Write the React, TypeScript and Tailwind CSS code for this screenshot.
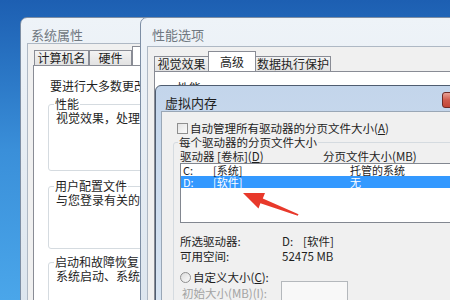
import React from 'react';

const FONT = "font-['Noto_Sans_CJK_SC','Noto_Sans',sans-serif]";

function Tab({ label, w, active }: { label: string; w: string; active?: boolean }) {
  return (
    <div
      className={`${w} shrink-0 flex items-center justify-center border border-b-0 border-[#898c95] text-[12px] leading-[14px] text-[#1e1e1e] whitespace-nowrap ${
        active ? 'h-[20px] bg-white -mx-[1px] relative z-10' : 'h-[15px] bg-gradient-to-b from-[#f3f3f3] to-[#e2e2e2]'
      }`}
    >
      {label}
    </div>
  );
}

function Group({ legend, text, cls }: { legend: string; text: string; cls: string }) {
  return (
    <fieldset className={`${cls} w-[120px] border border-[#d5dbe0] rounded-[3px]`}>
      <legend className="ml-[5px] px-[1px] text-[12px] leading-[14px] text-[#1e1e1e] whitespace-nowrap">{legend}</legend>
      <div className="pl-[7px] text-[12px] leading-[14px] text-[#1e1e1e] whitespace-nowrap">{text}</div>
    </fieldset>
  );
}

export default function App() {
  return (
    <div className={`${FONT} relative w-[450px] h-[300px] overflow-hidden bg-gradient-to-b from-[#1d5fb2] via-[#3a8fd9] to-[#4aa6ea]`}>
      {/* 系统属性 */}
      <div className="absolute left-[20px] top-[17px] w-[135px] h-[300px] rounded-t-[7px] border border-[#7d8ea4] bg-gradient-to-b from-[#eef3f8] to-[#dce5ee] flex flex-col">
        <div className="h-[28px] pt-[9px] pl-[10px] text-[13px] leading-[16px] text-[#707880]">系统属性</div>
        <div className="flex-1 ml-[6px] bg-[#f0f0f0] border-l border-t border-[#aeb8c4] pt-[4px] pl-[5px] flex flex-col">
          <div className="flex items-end h-[17px] pl-[1px]">
            <Tab label="计算机名" w="w-[55px]" />
            <Tab label="硬件" w="w-[43px]" />
            <div className="w-[30px] h-[19px] border border-b-0 border-[#898c95] bg-white" />
          </div>
          <div className="flex-1 bg-white border border-[#898c95] pl-[14px] flex flex-col">
            <div className="mt-[13px] pl-[2px] text-[12px] leading-[14px] text-[#1e1e1e] whitespace-nowrap">要进行大多数更改</div>
            <Group cls="mt-[4px] h-[74px]" legend="性能" text="视觉效果，处理器" />
            <Group cls="mt-[8px] h-[70px]" legend="用户配置文件" text="与您登录有关的桌" />
            <Group cls="mt-[6px] h-[60px]" legend="启动和故障恢复" text="系统启动、系统失" />
          </div>
        </div>
      </div>

      {/* 性能选项 */}
      <div className="absolute left-[140px] top-[17px] w-[330px] h-[300px] rounded-tl-[7px] border border-[#7d8ea4] bg-gradient-to-b from-[#eef3f8] to-[#dce5ee] flex flex-col">
        <div className="h-[28px] pt-[9px] pl-[11px] text-[13px] leading-[16px] text-[#707880]">性能选项</div>
        <div className="flex-1 ml-[6px] bg-[#f0f0f0] border-l border-t border-[#aeb8c4] pt-[5px] pl-[6px] flex flex-col">
          <div className="flex items-end h-[19px]">
            <Tab label="视觉效果" w="w-[55px]" />
            <Tab label="高级" w="w-[48px]" active />
            <Tab label="数据执行保护" w="w-[76px]" />
          </div>
          <div className="flex-1 bg-white border border-[#898c95] pl-[14px]">
            <fieldset className="mt-[9px] w-[250px] h-[40px] border border-[#d5dbe0] rounded-[3px]">
              <legend className="ml-[6px] px-[1px] text-[12px] leading-[14px] text-[#1e1e1e]">性能</legend>
            </fieldset>
          </div>
        </div>
      </div>

      {/* 虚拟内存 */}
      <div className="absolute left-[155px] top-[85px] w-[324px] h-[230px] rounded-tl-[6px] border border-[#4f5d70] bg-gradient-to-b from-[#c3d5eb] to-[#d9e5f2] flex flex-col">
        <div className="h-[28px] flex items-start">
          <div className="pt-[9px] pl-[9px] text-[13px] leading-[16px] text-[#1e1e1e]">虚拟内存</div>
          <div className="ml-auto mr-[6px] mt-[6px] w-[30px] h-[16px] rounded-[3px] border border-[#6e2b26] bg-gradient-to-b from-[#e8a196] via-[#cf5a4c] to-[#c24535]" />
        </div>
        <div className="flex-1 ml-[5px] bg-[#f0f0f0] border-l border-t border-[#9aa7b6] flex flex-col">
          <div className="mt-[9px] ml-[15px] flex items-center h-[14px]">
            <div className="w-[11px] h-[11px] border border-[#8f8f8f] bg-gradient-to-br from-[#e4e4e4] to-[#fafafa]" />
            <span className="ml-[2px] text-[11.5px] leading-[14px] text-[#1e1e1e] whitespace-nowrap">
              自动管理所有驱动器的分页文件大小(<span className="underline">A</span>)
            </span>
          </div>
          <fieldset className="ml-[11px] w-[300px] h-[200px] border border-[#d5dbe0] rounded-[3px]">
            <legend className="ml-[4px] px-[1px] text-[11.5px] leading-[14px] text-[#1e1e1e] whitespace-nowrap">每个驱动器的分页文件大小</legend>
            <div className="pl-[6px]">
              <div className="flex h-[14px] text-[11.5px] leading-[14px] text-[#1e1e1e] whitespace-nowrap">
                <span className="w-[143px]">驱动器 [卷标](<span className="underline">D</span>)</span>
                <span>分页文件大小(MB)</span>
              </div>
              <div className="w-[280px] h-[60px] bg-white border border-[#828790] text-[11px] leading-[12px] whitespace-nowrap">
                <div className="flex h-[12px] text-[#1e1e1e] pl-[2px]">
                  <span className="w-[30px]">C:</span>
                  <span className="w-[137px]">[系统]</span>
                  <span>托管的系统</span>
                </div>
                <div className="flex h-[12px] bg-[#3399ff] text-white pl-[2px]">
                  <span className="w-[30px]">D:</span>
                  <span className="w-[137px]">[软件]</span>
                  <span>无</span>
                </div>
              </div>
              <div className="mt-[11px] flex text-[11.5px] leading-[15px] text-[#1e1e1e] whitespace-nowrap">
                <span className="w-[102px]">所选驱动器:</span>
                <span className="w-[21px]">D:</span>
                <span>[软件]</span>
              </div>
              <div className="flex text-[11.5px] leading-[15px] text-[#1e1e1e] whitespace-nowrap">
                <span className="w-[102px]">可用空间:</span>
                <span>52475 MB</span>
              </div>
              <div className="mt-[6px] flex items-center h-[14px]">
                <div className="w-[11px] h-[11px] rounded-full border border-[#8f8f8f] bg-gradient-to-br from-[#dcdcdc] to-[#fafafa]" />
                <span className="ml-[2px] text-[11.5px] leading-[14px] text-[#1e1e1e] whitespace-nowrap">
                  自定义大小(<span className="underline">C</span>):
                </span>
              </div>
              <div className="-mt-[6px] flex items-center h-[22px]">
                <span className="w-[101px] pl-[2px] pt-[8px] text-[11.5px] leading-[14px] text-[#a3a3a3] whitespace-nowrap">初始大小(MB)(I):</span>
                <div className="w-[67px] h-[22px] mt-[6px] border border-[#b4b8bc] bg-[#f8f8f8]" />
              </div>
            </div>
          </fieldset>
        </div>
      </div>

      {/* red arrow */}
      <svg className="absolute left-[240px] top-[188px]" width="70" height="34" viewBox="0 0 70 34">
        <polygon
          points="3,5 25,5 22.8,10.5 58.5,26.2 57.8,27.8 20.4,15.2 18.5,20.5"
          fill="#e8392b"
        />
      </svg>
    </div>
  );
}
